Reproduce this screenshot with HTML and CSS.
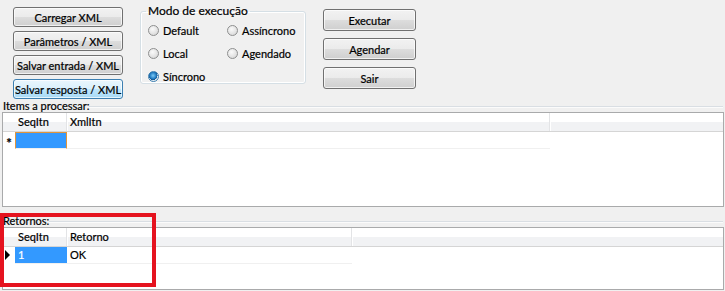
FILE: index.html
```html
<!DOCTYPE html>
<html lang="pt">
<head>
    <meta charset="UTF-8">
    <title>Processar XML</title>
    <link rel="stylesheet" href="styles.css">
</head>
<body>
    <div class="toolbar">
        <div class="btn-col left">
            <button class="btn">Carregar XML</button>
            <button class="btn">Parâmetros / XML</button>
            <button class="btn">Salvar entrada / XML</button>
            <button class="btn active">Salvar resposta / XML</button>
        </div>

        <fieldset class="modes">
            <legend>Modo de execução</legend>
            <div class="radio-grid">
                <label class="radio"><span class="dot"></span>Default</label>
                <label class="radio"><span class="dot"></span>Assíncrono</label>
                <label class="radio"><span class="dot"></span>Local</label>
                <label class="radio"><span class="dot"></span>Agendado</label>
                <label class="radio"><span class="dot on"></span>Síncrono</label>
            </div>
        </fieldset>

        <div class="btn-col right">
            <button class="btn">Executar</button>
            <button class="btn">Agendar</button>
            <button class="btn">Sair</button>
        </div>
    </div>

    <div class="section first">
        <div class="section-title"><span>Items a processar:</span><i></i></div>
        <div class="grid items">
            <div class="row head">
                <div class="rh"></div>
                <div class="cell c1">SeqItn</div>
                <div class="cell c2">XmlItn</div>
                <div class="cell fill"></div>
            </div>
            <div class="row">
                <div class="rh star">*</div>
                <div class="cell c1 current"></div>
                <div class="cell c2"></div>
            </div>
        </div>
    </div>

    <div class="section second">
        <div class="section-title"><span>Retornos:</span><i></i></div>
        <div class="grid results">
            <div class="row head">
                <div class="rh"></div>
                <div class="cell c1">SeqItn</div>
                <div class="cell c2">Retorno</div>
                <div class="cell fill"></div>
            </div>
            <div class="row">
                <div class="rh"><span class="arrow"></span></div>
                <div class="cell c1 selected">1</div>
                <div class="cell c2">OK</div>
            </div>
        </div>
    </div>

    <div class="highlight"></div>
</body>
</html>
```

FILE: styles.css
```css
body {
    margin: 0;
    width: 725px;
    height: 291px;
    overflow: hidden;
    background: #f0f0f0;
    font-family: "Lato", "Open Sans", sans-serif;
    font-size: 11px;
    color: #000;
    -webkit-text-stroke: 0.2px #000;
    position: relative;
}

.toolbar {
    display: flex;
    height: 100px;
}

.btn-col {
    display: flex;
    flex-direction: column;
}
.btn-col.left {
    margin: 7px 0 0 13px;
    width: 110px;
    gap: 4px;
}
.btn-col.right {
    margin: 9px 0 0 17px;
    width: 93px;
    gap: 7px;
}

.btn {
    height: 20px;
    padding: 0;
    font: inherit;
    color: #000;
    white-space: nowrap;
    border: 1px solid #707070;
    border-radius: 3px;
    background: linear-gradient(#f2f2f2 0%, #ebebeb 50%, #dddddd 51%, #cfcfcf 100%);
    box-shadow: inset 0 0 0 1px rgba(255,255,255,0.7);
}
.btn-col.right .btn {
    height: 22px;
}
.btn.active {
    border-color: #3c7fb1;
    background: linear-gradient(#eaf6fd 0%, #d9f0fc 50%, #bee6fd 51%, #a7d9f5 100%);
}

.modes {
    margin: 4px 0 0 17px;
    width: 166px;
    height: 80px;
    box-sizing: border-box;
    padding: 0 0 0 7px;
    border: 1px solid #d5dfe5;
    border-radius: 3px;
    box-shadow: inset 0 0 0 1px #fff;
}
.modes legend {
    padding: 0 2px;
    margin-left: -2px;
    line-height: 14px;
    font-size: 12px;
}

.radio-grid {
    display: grid;
    grid-template-columns: 79px auto;
    row-gap: 9px;
    margin-top: 5px;
}
.radio {
    display: flex;
    align-items: center;
    gap: 4px;
    height: 14px;
}
.dot {
    width: 11px;
    height: 11px;
    border-radius: 50%;
    border: 1px solid #8e8f8f;
    background: radial-gradient(circle at 40% 35%, #fafafa 0%, #e2e2e2 60%, #cfcfcf 100%);
    box-sizing: border-box;
}
.dot.on {
    border-color: #3c7fb1;
    background: radial-gradient(circle at 45% 40%, #7ecbf5 0%, #1d78c0 45%, #1a4f80 60%, #dfe9f0 62%, #f6f6f6 100%);
}

.section-title {
    display: flex;
    align-items: center;
    height: 12px;
    margin-left: 3px;
    line-height: 12px;
}
.section-title i {
    flex: 1;
    height: 0;
    margin: 2px 2px 0 0;
    border-top: 1px solid #d9dee3;
    border-bottom: 1px solid #fbfbfb;
}
.section.second {
    margin-top: 8px;
}
.section.second .section-title {
    margin-bottom: 0;
}

.grid {
    margin: 0 1px 0 2px;
    border: 1px solid #a9aaab;
    background: #fff;
    box-sizing: border-box;
}
.grid.items {
    height: 95px;
}
.grid.results {
    height: 63px;
}

.row {
    display: flex;
    height: 17px;
    line-height: 16px;
}
.row.head {
    height: 18px;
    line-height: 18px;
    background: linear-gradient(#fff 0%, #fff 50%, #f1f2f4 51%, #f1f2f4 100%);
    border-bottom: 1px solid #d5d5d5;
}
.rh {
    width: 12px;
    flex: none;
    position: relative;
    text-align: center;
}
.rh.star {
    font-size: 13px;
    font-weight: bold;
    line-height: 22px;
}
.cell {
    flex: none;
    box-sizing: border-box;
    padding-left: 3px;
    white-space: nowrap;
}
.row.head .cell {
    border-right: 1px solid #e3e4e6;
    box-shadow: 1px 0 0 #fff;
}
.c1 {
    width: 52px;
}
.items .c2 {
    width: 483px;
}
.results .c2 {
    width: 285px;
}
.row.head .fill {
    flex: 1;
    border-right: none;
    box-shadow: none;
}
.row:not(.head) .cell {
    border-bottom: 1px solid #f0f0f0;
}

.cell.current {
    background: #3399ff;
    border: 1px solid #e0953c;
}
.cell.selected {
    background: #3399ff;
    color: #fff;
    -webkit-text-stroke: 0.2px #fff;
}
.arrow {
    position: absolute;
    left: 2px;
    top: 3px;
    width: 0;
    height: 0;
    border-top: 5px solid transparent;
    border-bottom: 5px solid transparent;
    border-left: 5px solid #000;
}

.highlight {
    position: absolute;
    left: 0;
    top: 213px;
    width: 156px;
    height: 74px;
    box-sizing: border-box;
    border: 4px solid #e5131f;
}
```
